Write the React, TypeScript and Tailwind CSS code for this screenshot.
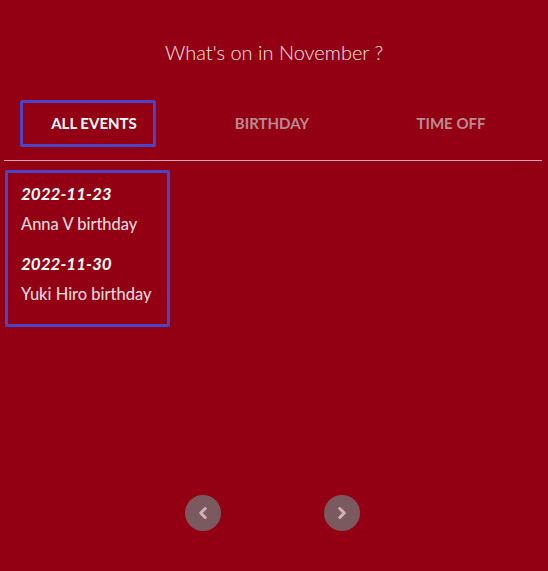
import { ChevronLeft, ChevronRight } from "lucide-react";

const tabs = [
  { label: "All events", cell: "w-[176px]" },
  { label: "Birthday", cell: "w-[192px]" },
  { label: "Time off", cell: "w-[166px]" },
];

const events = [
  { date: "2022-11-23", label: "Anna V birthday" },
  { date: "2022-11-30", label: "Yuki Hiro birthday" },
];

export default function App() {
  return (
    <div
      className="h-[571px] w-full bg-[#930013] text-white overflow-hidden"
      style={{ fontFamily: "Lato, 'Open Sans', sans-serif" }}
    >
      <h1 className="pt-[39px] text-center text-[20px] font-light leading-[26px] text-[#f6e6e8]">
        What's on in November ?
      </h1>

      <div className="mt-[35px] flex">
        {tabs.map((t, i) => (
          <div key={t.label} className={`flex justify-center ${t.cell}`}>
            <button
              type="button"
              className={
                i === 0
                  ? "h-[47px] w-[136px] rounded-[2px] border-[3px] border-[#4b44c6] pl-[12px] text-[15px] font-bold uppercase text-white"
                  : "h-[47px] w-[136px] text-[15px] font-bold uppercase text-[#b98a92]"
              }
            >
              {t.label}
            </button>
          </div>
        ))}
      </div>

      <div className="mx-[4px] mt-[13px] h-px w-[538px] bg-[#dba6ae]" />

      <div className="ml-[5px] mt-[9px] w-[165px] rounded-[2px] border-[3px] border-[#4b44c6] px-[13px] pt-[8px] pb-[19px]">
        {events.map((e, i) => (
          <div key={e.date} className={i > 0 ? "mt-[16px]" : ""}>
            <div className="text-[17px] font-bold italic leading-[26px]">{e.date}</div>
            <div className="mt-[6px] text-[16.5px] leading-[22px] text-[#f6e0e3]">{e.label}</div>
          </div>
        ))}
      </div>

      <div className="mt-[168px] flex">
        <button
          type="button"
          className="ml-[185px] flex h-[36px] w-[36px] items-center justify-center rounded-full bg-[#7b5a5f]"
        >
          <ChevronLeft className="h-[18px] w-[18px] text-[#d5b0b6]" strokeWidth={4} />
        </button>
        <button
          type="button"
          className="ml-[103px] flex h-[36px] w-[36px] items-center justify-center rounded-full bg-[#7b5a5f]"
        >
          <ChevronRight className="h-[18px] w-[18px] text-[#d5b0b6]" strokeWidth={4} />
        </button>
      </div>
    </div>
  );
}
